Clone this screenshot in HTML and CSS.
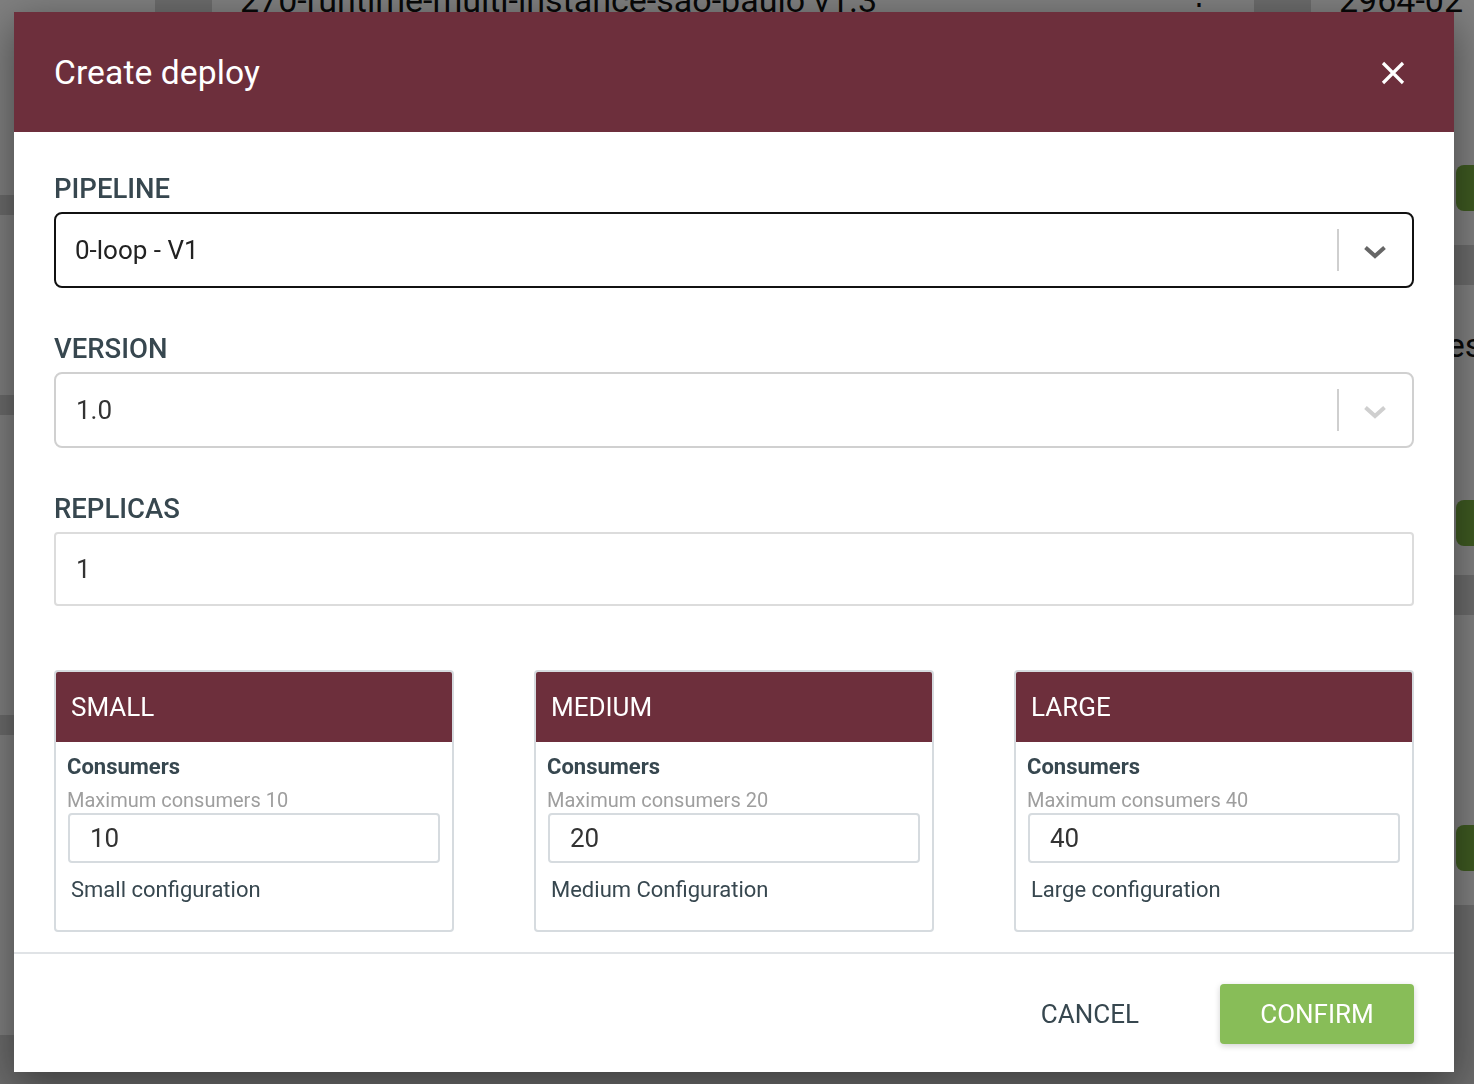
FILE: index.html
```html
<!DOCTYPE html>
<html lang="en">
<head>
<meta charset="utf-8">
<title>Create deploy</title>
<link rel="stylesheet" href="styles.css">
</head>
<body>
<div class="page">
  <div class="col col-narrow">
    <div class="bg-card h195"></div>
    <div class="bg-card h180"></div>
    <div class="bg-card h300"></div>
    <div class="bg-card h300"></div>
  </div>
  <div class="col">
    <div class="bg-card h240 first">
      <div class="bg-title">270-runtime-multi-instance-sao-paulo v1.3</div>
      <span class="bg-dots">⋮</span>
    </div>
    <div class="bg-card h300"></div>
    <div class="bg-card h300"></div>
  </div>
  <div class="col">
    <div class="bg-card h245 first">
      <div class="bg-title">2964-02</div>
      <div class="bg-sub">Size: 0</div>
      <div class="bg-btn b1"></div>
    </div>
    <div class="bg-card h290">
      <div class="bg-title">Runtimes</div>
      <div class="bg-sub">Size: 1</div>
      <div class="bg-btn b2"></div>
    </div>
    <div class="bg-card h290">
      <div class="bg-title">Test-t</div>
      <div class="bg-sub">Size: 1</div>
      <div class="bg-btn b3"></div>
    </div>
  </div>
</div>
<div class="overlay"></div>

<div class="modal">
  <div class="modal-header">
    <h1 class="modal-title">Create deploy</h1>
    <svg class="close" width="26" height="26" viewBox="0 0 26 26"><path d="M3 3 L23 23 M23 3 L3 23" stroke="#fff" stroke-width="3.2" fill="none"/></svg>
  </div>
  <div class="modal-body">
    <div class="field">
      <label class="label">PIPELINE</label>
      <div class="select focused">
        <span class="value">0-loop - V1</span>
        <span class="sep"></span>
        <span class="indicator"><svg width="24" height="14" viewBox="0 0 24 14"><polyline points="2.5,2.5 12,11 21.5,2.5" fill="none" stroke="#666" stroke-width="4"/></svg></span>
      </div>
    </div>
    <div class="field">
      <label class="label">VERSION</label>
      <div class="select disabled">
        <span class="value">1.0</span>
        <span class="sep"></span>
        <span class="indicator"><svg width="24" height="14" viewBox="0 0 24 14"><polyline points="2.5,2.5 12,11 21.5,2.5" fill="none" stroke="#cfcfcf" stroke-width="4"/></svg></span>
      </div>
    </div>
    <div class="field field-last">
      <label class="label">REPLICAS</label>
      <div class="input">1</div>
    </div>

    <div class="cards">
      <div class="card">
        <div class="card-head">SMALL</div>
        <div class="card-body">
          <div class="c-title">Consumers</div>
          <div class="c-hint">Maximum consumers 10</div>
          <div class="c-input">10</div>
          <div class="c-desc">Small configuration</div>
        </div>
      </div>
      <div class="card">
        <div class="card-head">MEDIUM</div>
        <div class="card-body">
          <div class="c-title">Consumers</div>
          <div class="c-hint">Maximum consumers 20</div>
          <div class="c-input">20</div>
          <div class="c-desc">Medium Configuration</div>
        </div>
      </div>
      <div class="card">
        <div class="card-head">LARGE</div>
        <div class="card-body">
          <div class="c-title">Consumers</div>
          <div class="c-hint">Maximum consumers 40</div>
          <div class="c-input">40</div>
          <div class="c-desc">Large configuration</div>
        </div>
      </div>
    </div>
  </div>
  <div class="modal-footer">
    <button class="btn cancel">CANCEL</button>
    <button class="btn confirm">CONFIRM</button>
  </div>
</div>
</body>
</html>
```

FILE: styles.css
```css
* { box-sizing: border-box; }
html, body { margin: 0; padding: 0; }
body {
  width: 1474px;
  height: 1084px;
  overflow: hidden;
  background: #d6d6d6;
  font-family: Roboto, "Liberation Sans", sans-serif;
  color: #37474f;
}

/* background page */
.page {
  display: flex;
  gap: 57px;
  height: 1084px;
  overflow: hidden;
}
.col {
  width: 1042px;
  flex: none;
  display: flex;
  flex-direction: column;
  gap: 40px;
}
.col-narrow { width: 155px; gap: 20px; }
.bg-card {
  background: #fff;
  position: relative;
  padding: 0 28px;
  overflow: hidden;
  flex: none;
}
.h195 { height: 195px; }
.h180 { height: 180px; }
.h240 { height: 240px; }
.h245 { height: 245px; }
.h290 { height: 290px; }
.h300 { height: 300px; }
.bg-title {
  font-size: 34px;
  color: #111;
  line-height: 40px;
  margin-top: 40px;
  white-space: nowrap;
}
.first .bg-title { margin-top: -20px; }
.bg-sub { font-size: 22px; color: #666; margin-top: 6px; }
.bg-dots {
  position: absolute;
  right: 40px;
  top: -14px;
  font-size: 30px;
  color: #111;
}
.bg-btn {
  position: absolute;
  left: 145px;
  width: 90px;
  height: 46px;
  border-radius: 8px;
  background: #7cb342;
}
.b1 { top: 165px; }
.b2 { top: 215px; }
.b3 { top: 210px; }

.overlay {
  position: fixed;
  inset: 0;
  background: rgba(0, 0, 0, 0.5);
}

/* modal */
.modal {
  position: fixed;
  left: 14px;
  top: 12px;
  width: 1440px;
  height: 1060px;
  background: #fff;
  box-shadow: 0 12px 40px rgba(0, 0, 0, 0.45);
  display: flex;
  flex-direction: column;
}
.modal-header {
  height: 120px;
  flex: none;
  background: #6d2f3c;
  display: flex;
  align-items: center;
  justify-content: space-between;
  padding: 0 48px 0 40px;
}
.modal-title {
  margin: 0;
  font-size: 33.6px;
  font-weight: 400;
  color: #fff;
  letter-spacing: 0.1px;
}
.close { display: block; margin-top: 2px; }

.modal-body {
  padding: 40px 40px 20px;
  flex: none;
}
.field { margin-bottom: 44px; }
.field-last { margin-bottom: 64px; }
.label {
  display: block;
  font-size: 27.5px;
  line-height: 34px;
  font-weight: 500;
  color: #37474f;
  margin-bottom: 6px;
}
.select {
  height: 76px;
  border: 2px solid #d0d0d0;
  border-radius: 8px;
  display: flex;
  align-items: center;
  padding-left: 19px;
  font-size: 26px;
  color: #222;
}
.select.focused { border-color: #111; }
.select .value { flex: 1; }
.select.disabled .value { color: #333; padding-left: 1px; }
.sep {
  width: 2px;
  height: 42px;
  background: #cfcfcf;
}
.indicator {
  width: 73px;
  display: flex;
  justify-content: center;
  padding-right: 2px;
  padding-top: 4px;
}
.indicator svg { display: block; }
.input {
  height: 74px;
  border: 2px solid #dcdcdc;
  border-radius: 4px;
  display: flex;
  align-items: center;
  padding-left: 20px;
  font-size: 26px;
  color: #333;
}

.cards {
  display: flex;
  justify-content: space-between;
}
.card {
  width: 400px;
  height: 262px;
  border: 2px solid #d6dbdf;
  border-radius: 4px;
  overflow: hidden;
}
.card-head {
  height: 70px;
  background: #6d2f3c;
  color: #fff;
  font-size: 26px;
  line-height: 70px;
  padding-left: 15px;
}
.card-body {
  padding: 10px 12px 0 11px;
}
.c-title {
  font-size: 22px;
  font-weight: 700;
  color: #37474f;
  line-height: 30px;
}
.c-hint {
  font-size: 20px;
  color: #9e9e9e;
  line-height: 26px;
  margin-top: 5px;
}
.c-input {
  height: 50px;
  border: 2px solid #d6dbdf;
  border-radius: 4px;
  margin: 0 0 0 1px;
  font-size: 26px;
  line-height: 46px;
  padding-left: 20px;
  color: #333;
}
.c-desc {
  font-size: 22px;
  line-height: 30px;
  margin-top: 12px;
  padding-left: 4px;
  color: #37474f;
}

.modal-footer {
  flex: 1;
  border-top: 2px solid #e0e3e6;
  display: flex;
  justify-content: flex-end;
  align-items: flex-start;
  padding: 30px 40px 0;
  gap: 53px;
}
.btn {
  font-family: Roboto, "Liberation Sans", sans-serif;
  font-size: 26px;
  border: none;
  background: none;
  height: 60px;
  border-radius: 4px;
  cursor: pointer;
}
.cancel { color: #37474f; padding: 0 28px; }
.confirm {
  background: #88bd58;
  color: #fff;
  width: 194px;
  box-shadow: 0 2px 6px rgba(0, 0, 0, 0.18);
}
```
